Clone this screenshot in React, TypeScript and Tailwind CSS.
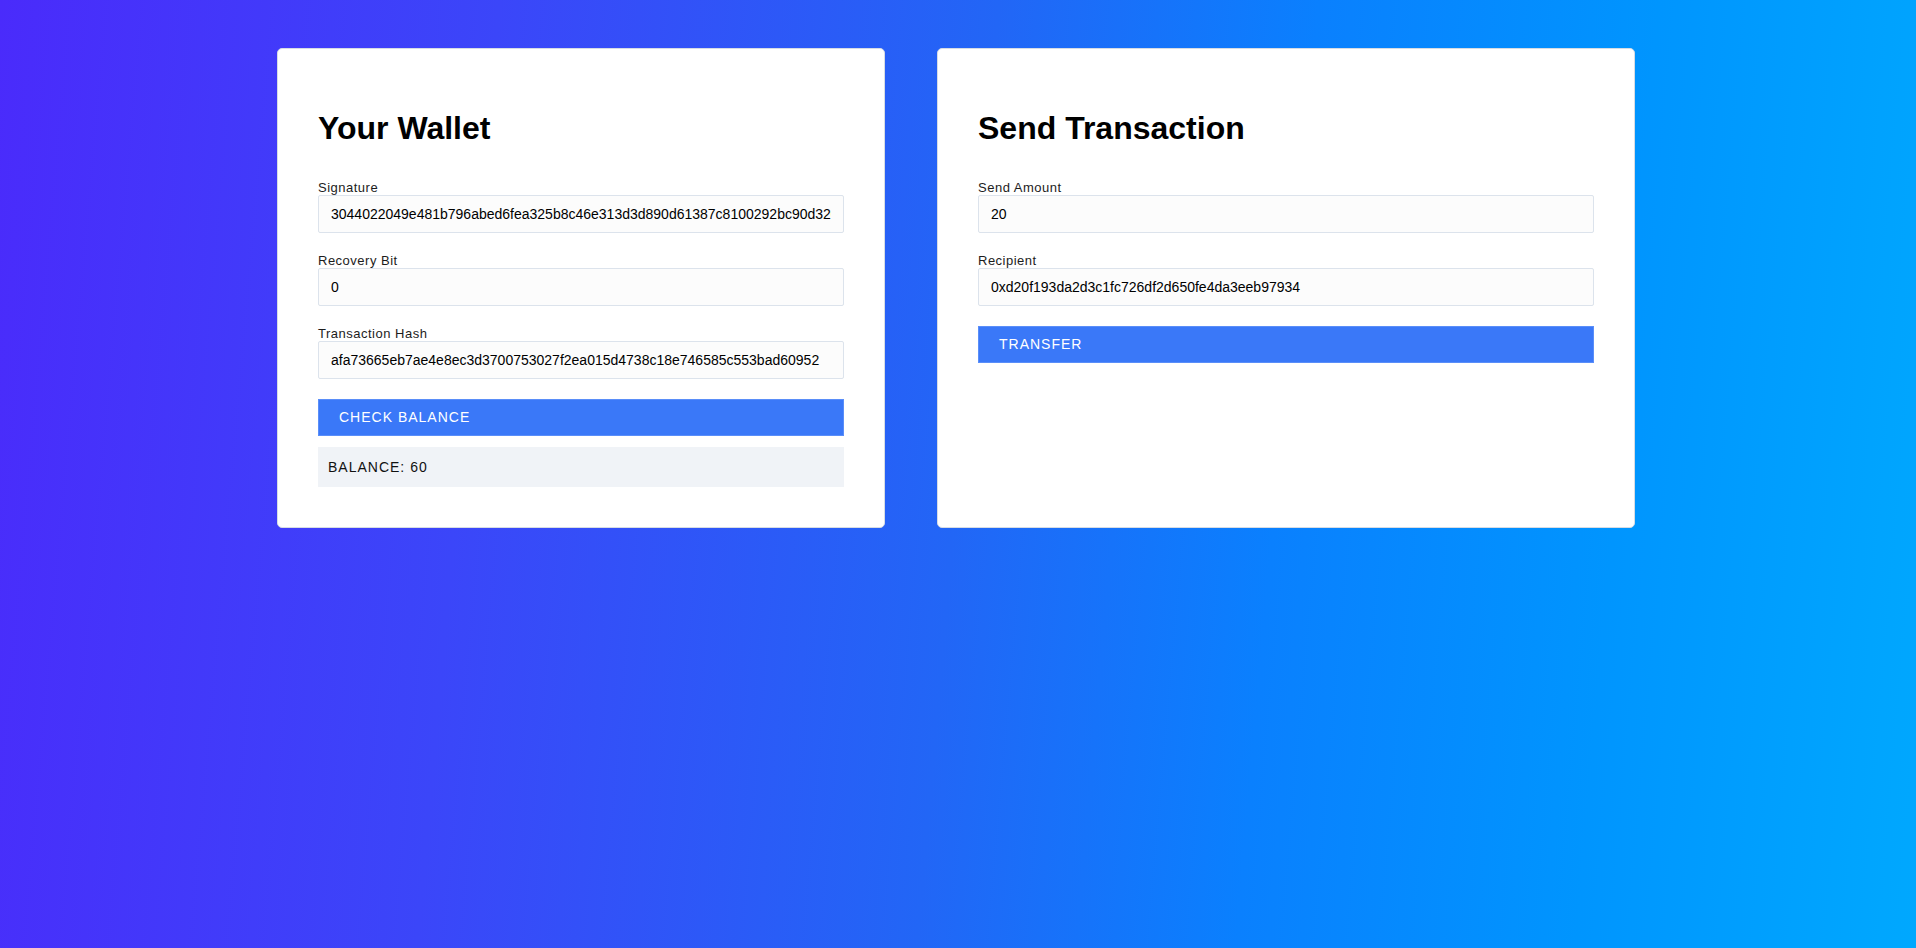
type FieldProps = {
  label: string
  value: string
}

function Field({ label, value }: FieldProps) {
  return (
    <label className="mb-[20px] flex flex-col">
      <span className="text-[13px] leading-[15px] tracking-[0.5px] text-[#1c1c1c]">
        {label}
      </span>
      <input
        className="h-[38px] w-full rounded-[2px] border border-[#dce3ec] bg-[#fcfcfc] px-3 text-[14px] text-black outline-none"
        type="text"
        defaultValue={value}
      />
    </label>
  )
}

function Card({
  title,
  width,
  children,
}: {
  title: string
  width: string
  children: React.ReactNode
}) {
  return (
    <div
      className={`${width} flex flex-col rounded-[5px] border border-[#d6dce4] bg-white px-[40px] pt-[40px] pb-[40px]`}
    >
      <h1 className="mt-[21px] mb-[33px] text-[32px] leading-[37px] font-bold text-black">
        {title}
      </h1>
      {children}
    </div>
  )
}

export default function App() {
  return (
    <div
      className="flex min-h-screen items-start justify-center bg-[linear-gradient(95deg,#4a2bfb_0%,#3b46f9_25%,#2266f6_50%,#0a80fe_66%,#0095fe_83%,#00a8fe_100%)] pt-[48px] pr-[4px]"
      style={{ fontFamily: '"Liberation Sans", Arial, sans-serif' }}
    >
      <div className="flex items-stretch gap-[52px]">
        <Card title="Your Wallet" width="w-[608px]">
          <Field
            label="Signature"
            value="3044022049e481b796abed6fea325b8c46e313d3d890d61387c8100292bc90d3205e1f6a7b2c"
          />
          <Field label="Recovery Bit" value="0" />
          <Field
            label="Transaction Hash"
            value="afa73665eb7ae4e8ec3d3700753027f2ea015d4738c18e746585c553bad60952"
          />
          <button className="h-[37px] w-full border border-[#5a8ef9] bg-[#3a78f8] px-[20px] text-left text-[14px] tracking-[1px] text-white">
            CHECK BALANCE
          </button>
          <div className="mt-[11px] flex h-[40px] items-center bg-[#f0f3f7] px-[10px] text-[14px] tracking-[1px] text-[#111]">
            BALANCE: 60
          </div>
        </Card>
        <Card title="Send Transaction" width="w-[698px]">
          <Field label="Send Amount" value="20" />
          <Field
            label="Recipient"
            value="0xd20f193da2d3c1fc726df2d650fe4da3eeb97934"
          />
          <button className="h-[37px] w-full border border-[#5a8ef9] bg-[#3a78f8] px-[20px] text-left text-[14px] tracking-[1px] text-white">
            TRANSFER
          </button>
        </Card>
      </div>
    </div>
  )
}
